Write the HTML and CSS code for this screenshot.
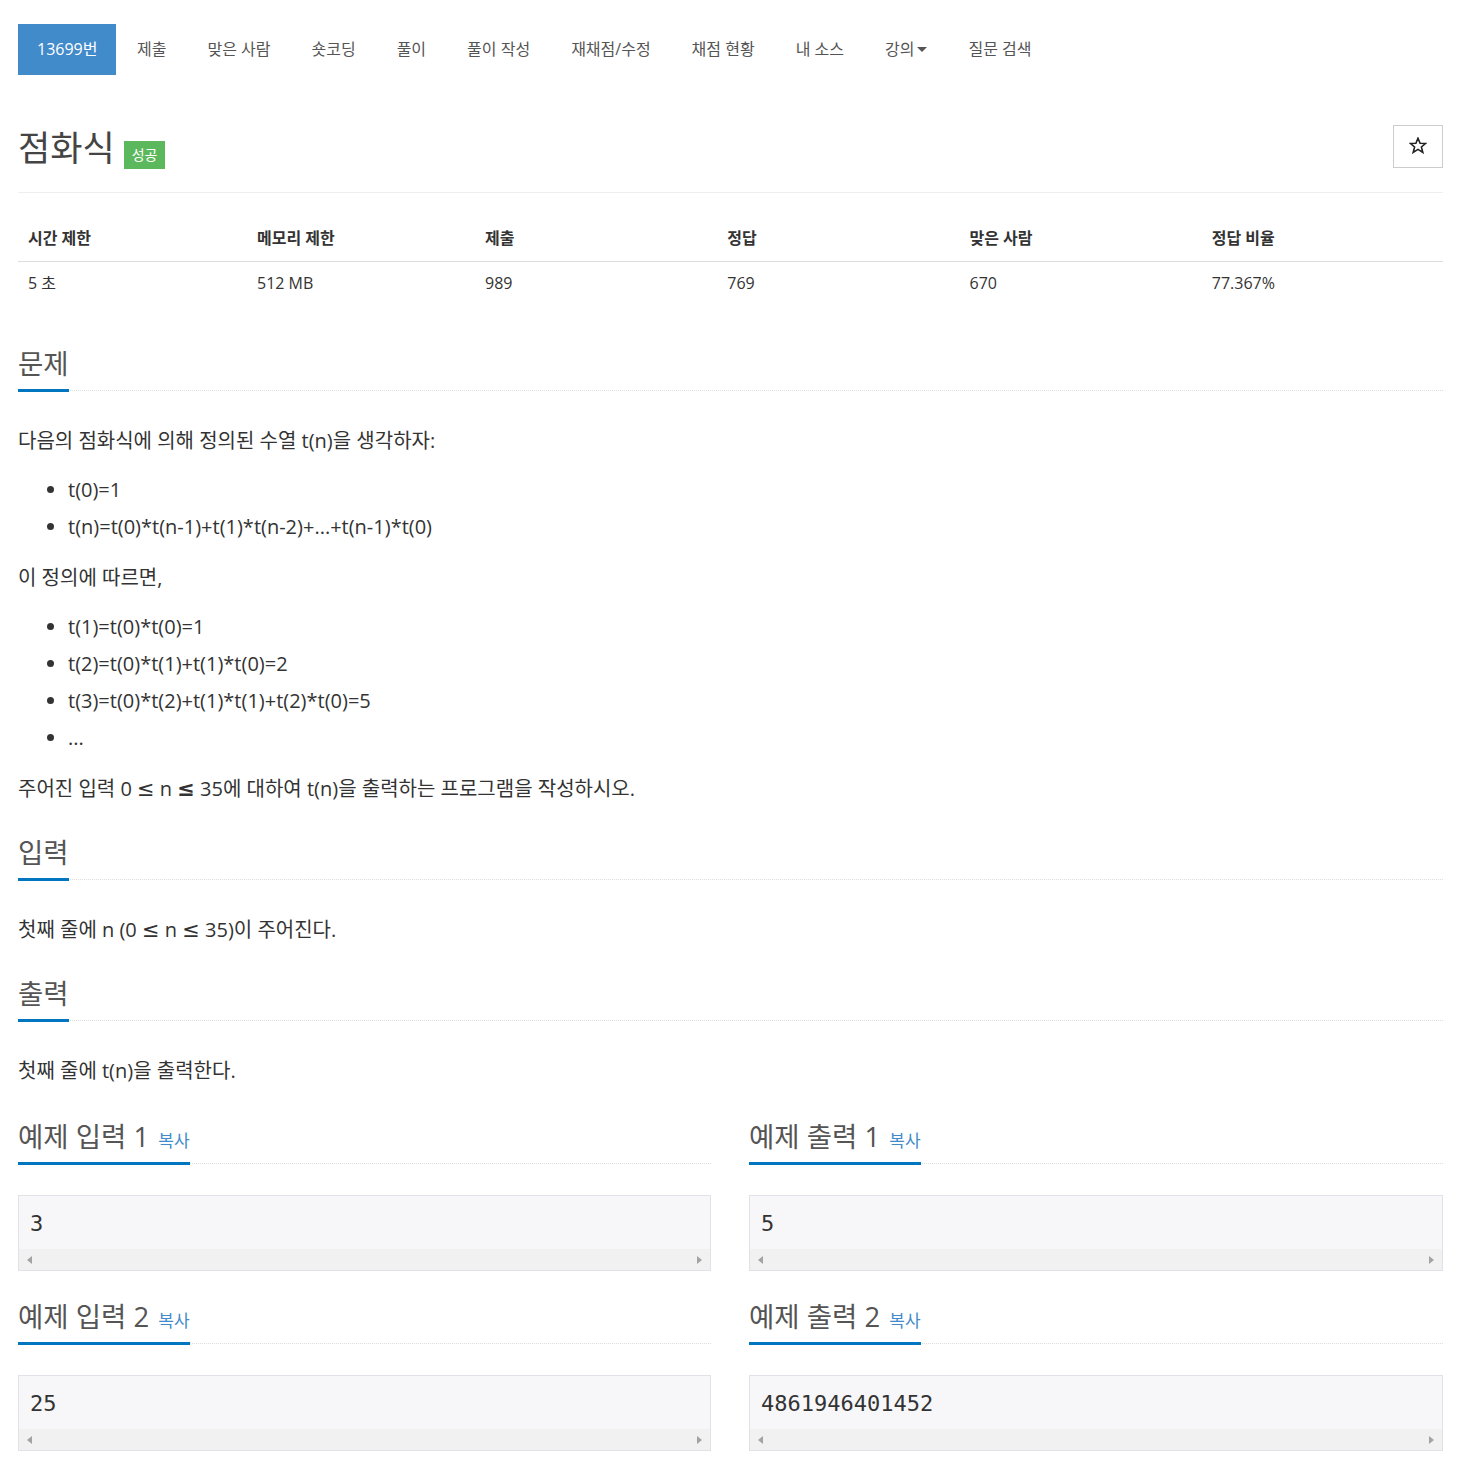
FILE: index.html
```html
<!DOCTYPE html>
<html lang="ko">
<head>
<meta charset="utf-8">
<title>점화식</title>
<link rel="stylesheet" href="styles.css">
</head>
<body>
<div class="container">
  <ul class="nav">
    <li class="active"><a>13699번</a></li>
    <li><a>제출</a></li>
    <li><a>맞은 사람</a></li>
    <li><a>숏코딩</a></li>
    <li><a>풀이</a></li>
    <li><a>풀이 작성</a></li>
    <li><a>재채점/수정</a></li>
    <li><a>채점 현황</a></li>
    <li><a>내 소스</a></li>
    <li><a>강의<span class="caret"></span></a></li>
    <li><a>질문 검색</a></li>
  </ul>

  <div class="page-header">
    <h1 class="title">점화식 <span class="label">성공</span></h1>
    <button class="star"><svg width="18" height="17" viewBox="0 0 18 17"><path d="M9 1.2 L11.1 6.2 L16.6 6.5 L12.4 10 L13.8 15.4 L9 12.4 L4.2 15.4 L5.6 10 L1.4 6.5 L6.9 6.2 Z" fill="none" stroke="#222" stroke-width="1.6" stroke-linejoin="miter"/></svg></button>
  </div>

  <table class="info">
    <thead>
      <tr><th class="c1">시간 제한</th><th class="c2">메모리 제한</th><th class="c3">제출</th><th class="c3">정답</th><th class="c3">맞은 사람</th><th>정답 비율</th></tr>
    </thead>
    <tbody>
      <tr><td>5 초</td><td>512 MB</td><td>989</td><td>769</td><td>670</td><td>77.367%</td></tr>
    </tbody>
  </table>

  <section class="section first">
    <h2 class="headline"><span>문제</span></h2>
    <div class="text">
      <p>다음의 점화식에 의해 정의된 수열 t(n)을 생각하자:</p>
      <ul>
        <li>t(0)=1</li>
        <li>t(n)=t(0)*t(n-1)+t(1)*t(n-2)+...+t(n-1)*t(0)</li>
      </ul>
      <p>이 정의에 따르면,</p>
      <ul>
        <li>t(1)=t(0)*t(0)=1</li>
        <li>t(2)=t(0)*t(1)+t(1)*t(0)=2</li>
        <li>t(3)=t(0)*t(2)+t(1)*t(1)+t(2)*t(0)=5</li>
        <li>...</li>
      </ul>
      <p>주어진 입력 0 <span class="le">≤</span> n <span class="le b">≤</span> 35에 대하여 t(n)을 출력하는 프로그램을 작성하시오.</p>
    </div>
  </section>

  <section class="section">
    <h2 class="headline"><span>입력</span></h2>
    <div class="text">
      <p>첫째 줄에 n (0 <span class="le">≤</span> n <span class="le">≤</span> 35)이 주어진다.</p>
    </div>
  </section>

  <section class="section">
    <h2 class="headline"><span>출력</span></h2>
    <div class="text">
      <p>첫째 줄에 t(n)을 출력한다.</p>
    </div>
  </section>

  <div class="samples">
    <section class="sample">
      <h2 class="headline"><span>예제 입력 1 <a class="copy">복사</a></span></h2>
      <div class="pre"><div class="data">3</div><div class="scroll"><i class="arr l"></i><i class="arr r"></i></div></div>
    </section>
    <section class="sample">
      <h2 class="headline"><span>예제 출력 1 <a class="copy">복사</a></span></h2>
      <div class="pre"><div class="data">5</div><div class="scroll"><i class="arr l"></i><i class="arr r"></i></div></div>
    </section>
    <section class="sample">
      <h2 class="headline"><span>예제 입력 2 <a class="copy">복사</a></span></h2>
      <div class="pre"><div class="data">25</div><div class="scroll"><i class="arr l"></i><i class="arr r"></i></div></div>
    </section>
    <section class="sample">
      <h2 class="headline"><span>예제 출력 2 <a class="copy">복사</a></span></h2>
      <div class="pre"><div class="data">4861946401452</div><div class="scroll"><i class="arr l"></i><i class="arr r"></i></div></div>
    </section>
  </div>
</div>
</body>
</html>
```

FILE: styles.css
```css
* { box-sizing: border-box; }
html, body { margin: 0; padding: 0; background: #fff; }
body {
  font-family: "Open Sans", "Noto Sans CJK KR", sans-serif;
  color: #333;
  font-size: 16px;
  line-height: 1.42857;
}
.container { padding: 24px 23px 20px 18px; }

.nav {
  list-style: none;
  margin: 0;
  padding: 0;
  display: flex;
  height: 51px;
}
.nav li a {
  display: flex;
  align-items: center;
  height: 51px;
  padding: 0 20.5px;
  color: #555;
  font-size: 16px;
  white-space: nowrap;
}
.nav li.active a { background: #428bca; color: #fff; padding: 0 19px; }
.caret {
  display: inline-block;
  width: 0; height: 0;
  margin-left: 3px;
  border-top: 5px solid #555;
  border-left: 5px solid transparent;
  border-right: 5px solid transparent;
}

.page-header {
  margin-top: 51px;
  padding-bottom: 22px;
  border-bottom: 1px solid #eee;
  display: flex;
  justify-content: space-between;
  align-items: center;
}
.title {
  margin: 0;
  font-size: 35px;
  font-weight: 400;
  line-height: 44px;
  color: #444;
}
.label {
  display: inline-block;
  vertical-align: middle;
  background: #5cb85c;
  color: #fff;
  font-size: 14px;
  line-height: 28px;
  height: 28px;
  padding: 0 8px;
  margin-left: 0;
  margin-top: -6px;
  position: relative;
  top: 6px;
}
.star {
  width: 50px;
  height: 43px;
  background: #fff;
  border: 1px solid #ccc;
  padding: 0;
  margin-top: -4px;
  display: flex;
  align-items: center;
  justify-content: center;
}
.star svg { display: block; margin-top: -2px; }

.info {
  width: 100%;
  border-collapse: collapse;
  margin-top: 22px;
  table-layout: fixed;
}
.info th, .info td { text-align: left; padding: 0 10px; }
.info th {
  height: 46px;
  padding-top: 2px;
  font-size: 16px;
  font-weight: 700;
  border-bottom: 1px solid #ddd;
}
.info td { height: 44px; font-size: 16px; }
.info .c1 { width: 16.07%; }
.info .c2 { width: 16%; }
.info .c3 { width: 17%; }

.headline {
  margin: 0;
  font-size: 27.5px;
  font-weight: 400;
  line-height: 36px;
  color: #555;
  border-bottom: 1px dotted #ddd;
}
.headline > span {
  display: inline-block;
  height: 46px;
  padding-bottom: 8px;
  border-bottom: 3px solid #0076c0;
  margin-bottom: -2px;
  white-space: nowrap;
}
.copy { font-size: 17px; line-height: 0; color: #428bca; margin-left: 2px; }

.section { margin-top: 31px; }
.section.first { margin-top: 41px; }
.text { margin-top: 35px; font-size: 20px; line-height: 30px; }
.text p { margin: 0 0 19px; }
.text p:last-child { margin-bottom: 0; }
.text ul { margin: 0 0 21px; padding-left: 50px; }
.text li + li { margin-top: 7px; }
.le { font-family: "DejaVu Sans", sans-serif; font-size: 21px; line-height: 0; }
.le.b { font-weight: 700; }

.samples {
  margin-top: 33px;
  display: grid;
  grid-template-columns: 693px 694px;
  column-gap: 38px;
  row-gap: 28px;
}
.pre {
  margin-top: 31px;
  background: #f7f7f9;
  border: 1px solid #e1e1e8;
}
.data {
  font-family: "DejaVu Sans Mono", monospace;
  font-size: 22px;
  line-height: 30px;
  padding: 13px 11px 10px;
  color: #333;
}
.scroll {
  height: 21px;
  background: #f1f1f1;
  display: flex;
  align-items: center;
  justify-content: space-between;
  padding: 0 8px;
}
.arr { width: 0; height: 0; border-top: 4px solid transparent; border-bottom: 4px solid transparent; }
.arr.l { border-right: 5px solid #a3a3a3; }
.arr.r { border-left: 5px solid #a3a3a3; }
```
